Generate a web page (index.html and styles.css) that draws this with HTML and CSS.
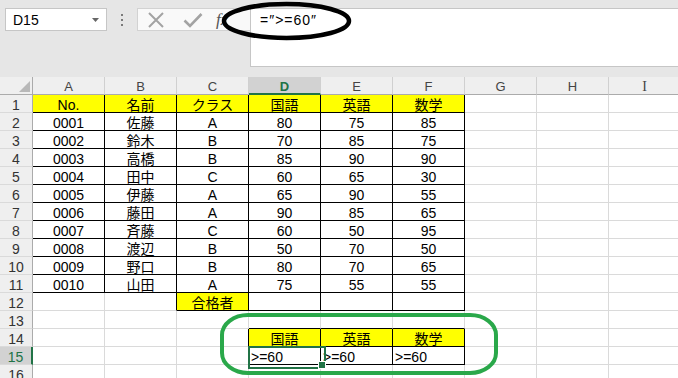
FILE: index.html
```html
<!DOCTYPE html>
<html lang="ja">
<head>
<meta charset="utf-8">
<title>Excel</title>
<link rel="stylesheet" href="styles.css">
</head>
<body>
<div class="app">
  <div class="toolbar">
    <div class="namebox">
      <span class="ref">D15</span>
      <svg class="caret" width="7" height="4" viewBox="0 0 7 4"><path d="M0 0H7L3.5 4Z" fill="#666"/></svg>
    </div>
    <div class="dots"><i></i><i></i><i></i></div>
    <div class="fxbtns">
      <svg class="btn" width="18" height="16" viewBox="0 0 18 16"><path d="M2 1L16 15M16 1L2 15" stroke="#a3a3a3" stroke-width="2" fill="none"/></svg>
      <svg class="btn" width="20" height="16" viewBox="0 0 20 16"><path d="M1.5 8.5L7 14L18.5 2" stroke="#a3a3a3" stroke-width="2.6" fill="none"/></svg>
      <span class="fx">fx</span>
    </div>
    <div class="formula"><span class="ftext">=″&gt;=60″</span></div>
  </div>

  <div class="sheet">
    <div class="corner"><svg width="11" height="11" viewBox="0 0 11 11"><path d="M11 0V11H0Z" fill="#b8b8b8"/></svg></div>
    <div class="ch">A</div><div class="ch">B</div><div class="ch">C</div><div class="ch sel">D</div><div class="ch">E</div><div class="ch">F</div><div class="ch">G</div><div class="ch">H</div><div class="ch serif">I</div>

    <div class="rh">1</div>
    <div class="c k y">No.</div><div class="c k y">名前</div><div class="c k y">クラス</div><div class="c k y">国語</div><div class="c k y">英語</div><div class="c k y">数学</div><div class="c"></div><div class="c"></div><div class="c"></div>

    <div class="rh">2</div>
    <div class="c k">0001</div><div class="c k">佐藤</div><div class="c k">A</div><div class="c k">80</div><div class="c k">75</div><div class="c k">85</div><div class="c"></div><div class="c"></div><div class="c"></div>

    <div class="rh">3</div>
    <div class="c k">0002</div><div class="c k">鈴木</div><div class="c k">B</div><div class="c k">70</div><div class="c k">85</div><div class="c k">75</div><div class="c"></div><div class="c"></div><div class="c"></div>

    <div class="rh">4</div>
    <div class="c k">0003</div><div class="c k">高橋</div><div class="c k">B</div><div class="c k">85</div><div class="c k">90</div><div class="c k">90</div><div class="c"></div><div class="c"></div><div class="c"></div>

    <div class="rh">5</div>
    <div class="c k">0004</div><div class="c k">田中</div><div class="c k">C</div><div class="c k">60</div><div class="c k">65</div><div class="c k">30</div><div class="c"></div><div class="c"></div><div class="c"></div>

    <div class="rh">6</div>
    <div class="c k">0005</div><div class="c k">伊藤</div><div class="c k">A</div><div class="c k">65</div><div class="c k">90</div><div class="c k">55</div><div class="c"></div><div class="c"></div><div class="c"></div>

    <div class="rh">7</div>
    <div class="c k">0006</div><div class="c k">藤田</div><div class="c k">A</div><div class="c k">90</div><div class="c k">85</div><div class="c k">65</div><div class="c"></div><div class="c"></div><div class="c"></div>

    <div class="rh">8</div>
    <div class="c k">0007</div><div class="c k">斉藤</div><div class="c k">C</div><div class="c k">60</div><div class="c k">50</div><div class="c k">95</div><div class="c"></div><div class="c"></div><div class="c"></div>

    <div class="rh">9</div>
    <div class="c k">0008</div><div class="c k">渡辺</div><div class="c k">B</div><div class="c k">50</div><div class="c k">70</div><div class="c k">50</div><div class="c"></div><div class="c"></div><div class="c"></div>

    <div class="rh">10</div>
    <div class="c k">0009</div><div class="c k">野口</div><div class="c k">B</div><div class="c k">80</div><div class="c k">70</div><div class="c k">65</div><div class="c"></div><div class="c"></div><div class="c"></div>

    <div class="rh">11</div>
    <div class="c k">0010</div><div class="c k">山田</div><div class="c k">A</div><div class="c k">75</div><div class="c k">55</div><div class="c k">55</div><div class="c"></div><div class="c"></div><div class="c"></div>

    <div class="rh">12</div>
    <div class="c"></div><div class="c kr"></div><div class="c k y">合格者</div><div class="c k"></div><div class="c k"></div><div class="c k"></div><div class="c"></div><div class="c"></div><div class="c"></div>

    <div class="rh">13</div>
    <div class="c"></div><div class="c"></div><div class="c"></div><div class="c kb"></div><div class="c kb"></div><div class="c kb"></div><div class="c"></div><div class="c"></div><div class="c"></div>

    <div class="rh">14</div>
    <div class="c"></div><div class="c"></div><div class="c kr"></div><div class="c k y">国語</div><div class="c k y">英語</div><div class="c k y">数学</div><div class="c"></div><div class="c"></div><div class="c"></div>

    <div class="rh sel">15</div>
    <div class="c"></div><div class="c"></div><div class="c kr"></div><div class="c k l active">&gt;=60</div><div class="c k l">&gt;=60</div><div class="c k l">&gt;=60</div><div class="c"></div><div class="c"></div><div class="c"></div>

    <div class="rh">16</div>
    <div class="c"></div><div class="c"></div><div class="c"></div><div class="c"></div><div class="c"></div><div class="c"></div><div class="c"></div><div class="c"></div><div class="c"></div>
  </div>

  <svg class="marks" width="678" height="378" viewBox="0 0 678 378">
    <ellipse cx="286.5" cy="21" rx="62.5" ry="17" fill="none" stroke="#000" stroke-width="4.5"/>
    <rect x="222" y="315" width="274" height="58" rx="26" ry="20" fill="none" stroke="#2aa84a" stroke-width="4"/>
  </svg>
</div>
</body>
</html>
```

FILE: styles.css
```css
* { box-sizing: border-box; }

body {
  margin: 0;
  width: 678px;
  height: 378px;
  overflow: hidden;
  background: #fff;
  font-family: "Liberation Sans", "Noto Sans CJK JP", sans-serif;
  font-size: 14px;
  color: #000;
}

.app {
  position: relative;
  width: 678px;
  height: 378px;
  overflow: hidden;
}

/* ---------- formula bar ---------- */
.toolbar {
  height: 77px;
  background: #e6e6e6;
  display: flex;
  align-items: flex-start;
  padding: 8px 0 0 5px;
}

.namebox {
  width: 102px;
  height: 23px;
  flex: none;
  background: #fff;
  border: 1px solid #c6c6c6;
  display: flex;
  align-items: center;
  justify-content: space-between;
  padding: 0 7px 0 7px;
  font-family: "Liberation Sans", sans-serif;
  font-size: 14px;
  color: #000;
}

.namebox .ref { padding-top: 1px; }

.dots {
  width: 30px;
  height: 23px;
  flex: none;
  display: flex;
  flex-direction: column;
  align-items: center;
  justify-content: center;
  gap: 3px;
}
.dots i {
  display: block;
  width: 2px;
  height: 2px;
  background: #7a7a7a;
}

.fxbtns {
  width: 113px;
  height: 23px;
  flex: none;
  background: #f9f9f9;
  border: 1px solid #d2d2d2;
  border-right: none;
  display: flex;
  align-items: center;
  padding-left: 9px;
  gap: 18px;
}

.fx {
  font-family: "Liberation Serif", serif;
  font-style: italic;
  font-size: 17px;
  color: #555;
  margin-left: -5px;
}

.formula {
  flex: 1;
  height: 59px;
  background: #fff;
  border: 1px solid #c6c6c6;
  border-right: none;
  padding: 3px 0 0 9px;
  line-height: 16px;
  font-family: "Liberation Sans", sans-serif;
  font-size: 14px;
  letter-spacing: 1px;
}

/* ---------- sheet grid ---------- */
.sheet {
  display: grid;
  grid-template-columns: 33px repeat(9, 72px);
  grid-auto-rows: 18px;
}

.corner {
  background: #efefef;
  border-right: 1px solid #ababab;
  border-bottom: 1px solid #ababab;
  display: flex;
  align-items: flex-end;
  justify-content: flex-end;
  padding: 0 2px 2px 0;
}

.ch {
  background: #efefef;
  border-right: 1px solid #d0d0d0;
  border-bottom: 1px solid #ababab;
  text-align: center;
  color: #444;
  font-family: "Liberation Sans", sans-serif;
  font-size: 13px;
  line-height: 17px;
  padding-top: 1px;
}
.ch.serif { font-family: "Liberation Serif", serif; font-size: 14px; }

.ch.sel {
  background: #d2d2d2;
  color: #217346;
  font-weight: bold;
  border-bottom: 2px solid #217346;
}

.rh {
  background: #efefef;
  border-right: 1px solid #ababab;
  border-bottom: 1px solid #dadada;
  text-align: center;
  color: #333;
  font-family: "Liberation Sans", sans-serif;
  font-size: 14px;
  line-height: 16px;
  padding-top: 2px;
}

.rh.sel {
  background: #d2d2d2;
  color: #217346;
  border-right: 2px solid #217346;
}

.c {
  border-right: 1px solid #dadada;
  border-bottom: 1px solid #dadada;
  text-align: center;
  line-height: 16px;
  padding-top: 2px;
  white-space: nowrap;
}

.k { border-right-color: #000; border-bottom-color: #000; }
.kr { border-right-color: #000; }
.kb { border-bottom-color: #000; }
.y { background: #ffff00; }
.l { text-align: left; padding-left: 2px; }

.active { position: relative; }
.active::after {
  content: "";
  position: absolute;
  left: -1px;
  top: -1px;
  width: 74px;
  height: 19px;
  border: 2px solid #217346;
  z-index: 2;
}
.active::before {
  content: "";
  position: absolute;
  left: 69px;
  top: 14px;
  width: 6px;
  height: 6px;
  background: #217346;
  border: 1px solid #fff;
  z-index: 3;
}

/* ---------- annotations ---------- */
.marks {
  position: absolute;
  left: 0;
  top: 0;
  pointer-events: none;
}
```
